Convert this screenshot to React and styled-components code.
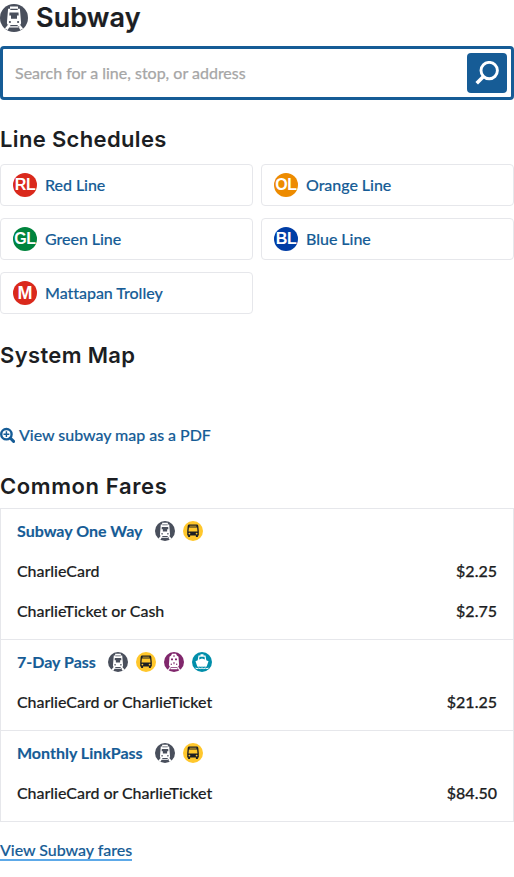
import React from "react";
import styled, { createGlobalStyle } from "styled-components";

const GlobalStyle = createGlobalStyle`
  *, *::before, *::after { box-sizing: border-box; }
  body {
    margin: 0;
    background: #fff;
    color: #1c1e23;
    font: 500 16px/24px Lato, "Liberation Sans", sans-serif;
    letter-spacing: -0.04px;
    -webkit-text-stroke: 0.15px;
  }
  a { color: #165c96; text-decoration: none; }
  svg { display: block; flex: none; }
`;

const Page = styled.main`
  width: 100%;
  height: 877px;
  overflow: hidden;
`;

const Title = styled.h1`
  display: flex;
  align-items: center;
  gap: 8px;
  height: 36px;
  margin: 0 0 10px;
  font: 600 27px/36px Inter, sans-serif;
  letter-spacing: 0.1px;
  -webkit-text-stroke: 0.2px;
`;

const SectionTitle = styled.h2`
  height: 32px;
  margin: ${(p) => p.$top}px 0 ${(p) => p.$bottom}px;
  font: 600 22px/32px Inter, sans-serif;
  letter-spacing: ${(p) => p.$tracking}px;
  white-space: nowrap;
  -webkit-text-stroke: 0;
`;

const SearchBox = styled.form`
  display: flex;
  align-items: center;
  height: 54px;
  padding: 0 4px 0 12px;
  border: 3px solid #165c96;
  border-radius: 4px;
`;

const SearchInput = styled.input`
  flex: 1;
  min-width: 0;
  padding: 0;
  border: 0;
  outline: 0;
  background: transparent;
  font: 400 16px/24px Lato, sans-serif;
  color: #1c1e23;
  &::placeholder { color: #a6a6a6; opacity: 1; -webkit-text-stroke: 0.25px; }
`;

const SearchButton = styled.button`
  display: grid;
  place-items: center;
  width: 40px;
  height: 40px;
  padding: 0;
  border: 0;
  border-radius: 4px;
  background: #165c96;
`;

const LineGrid = styled.div`
  display: grid;
  grid-template-columns: 1fr 1fr;
  gap: 12px 8px;
`;

const LineCard = styled.a`
  display: flex;
  align-items: center;
  gap: 8px;
  height: 42px;
  padding: 0 12px;
  border: 1px solid #e6e7eb;
  border-radius: 4px;
`;

const LineBadge = styled.span`
  display: flex;
  align-items: center;
  justify-content: center;
  width: 24px;
  height: 24px;
  border-radius: 50%;
  background: ${(p) => p.$color};
  color: #fff;
  font: 700 ${(p) => (p.$single ? 18 : 16)}px/24px "Liberation Sans", sans-serif;
  letter-spacing: ${(p) => (p.$single ? 0 : -0.4)}px;
  -webkit-text-stroke: 0;
`;

const MapLink = styled.a`
  display: flex;
  align-items: center;
  gap: 4px;
  height: 24px;
  margin-top: 52px;
`;

const FareTable = styled.div`
  border: 1px solid #e6e7eb;
`;

const FareGroup = styled.section`
  padding: 2px 16px 8px;
  & + & { border-top: 1px solid #e6e7eb; }
`;

const FareHeading = styled.div`
  display: flex;
  align-items: center;
  height: 40px;
  font-weight: 700;
  letter-spacing: 0;
`;

const FareName = styled.a`
  margin-right: 12px;
`;

const Modes = styled.div`
  display: flex;
  gap: 8px;
`;

const FareRow = styled.div`
  display: flex;
  align-items: center;
  justify-content: space-between;
  height: 40px;
`;

const Price = styled.span`
  letter-spacing: 0;
  -webkit-text-stroke: 0.25px;
`;

const FaresLink = styled.a`
  display: inline-block;
  height: 22px;
  margin-top: 17px;
  line-height: 22px;
  border-bottom: 2px solid #5da9e8;
`;

const SubwayIcon = ({ size = 20 }) => (
  <svg width={size} height={size} viewBox="0 0 28 28" aria-label="Subway">
    <circle cx="14" cy="14" r="14" fill="#494f5c" />
    <path fill="#fff" d="M10 2.6h8v2.2h1.9l1.2 14.3q0 1.9-1.8 1.9H8.7q-1.8 0-1.8-1.9L8.1 4.8H10z" />
    <path fill="#494f5c" d="M10.3 4.8h7.4v1.3h-7.4zM9.5 8.4h9l.2 3.1H9.3zM11 11h6v3.8h-6z" />
    <g fill="#494f5c">
      <circle cx="9.9" cy="18" r="1.1" />
      <circle cx="18.1" cy="18" r="1.1" />
    </g>
    <path fill="#fff" d="m8.2 20.5 2.4.4-2.9 5.2-2.8-1.5zM19.8 20.5l-2.4.4 2.9 5.2 2.8-1.5zM8.8 22.3h10.4v1.3H8.8z" />
  </svg>
);

const BusIcon = () => (
  <svg width="20" height="20" viewBox="0 0 20 20" aria-label="Bus">
    <circle cx="10" cy="10" r="10" fill="#ffc72c" />
    <path fill="#1c1e23" d="M6.3 3.6h7.4q1.5 0 1.6 1.4l.5 5v4.6h-.9V16h-2v-1.4H7.1V16h-2v-1.4h-.9V10l.5-5q.1-1.4 1.6-1.4" />
    <path fill="#ffc72c" d="M6.6 4.7h6.8v.8H6.6zM5.9 6.5h8.2l.4 4.1h-9z" />
    <circle cx="6.4" cy="12.6" r=".9" fill="#ffc72c" />
    <circle cx="13.6" cy="12.6" r=".9" fill="#ffc72c" />
  </svg>
);

const RailIcon = () => (
  <svg width="20" height="20" viewBox="0 0 20 20" aria-label="Commuter Rail">
    <circle cx="10" cy="10" r="10" fill="#80276c" />
    <path fill="#fff" d="M8 1.8h4l.8 1.6 1.7 1.3.6 8.5-1.5 2H6.4l-1.5-2 .6-8.5 1.7-1.3z" />
    <g fill="#80276c">
      <circle cx="10" cy="4.1" r=".8" />
      <path d="M7 6.4h2v1.8H7zM11 6.4h2v1.8h-2zM9.5 10h1v2.2h-1z" />
      <circle cx="7.3" cy="12.2" r=".7" />
      <circle cx="12.7" cy="12.2" r=".7" />
    </g>
    <path stroke="#fff" strokeWidth="1.2" fill="none" d="m6.5 14.5-2.2 3.7M13.5 14.5l2.2 3.7M6.5 16.7h7" />
  </svg>
);

const FerryIcon = () => (
  <svg width="20" height="20" viewBox="0 0 20 20" aria-label="Ferry">
    <circle cx="10" cy="10" r="10" fill="#008eaa" />
    <path fill="#fff" d="M8.5 2.2h3v1.3h2l.8 4.7 2.2 1-1.8 5.2q-1.2.9-2.4 0-1.2.9-2.3 0-1.1.9-2.3 0-1.2.9-2.4 0L3.5 9.2l2.2-1 .8-4.7h2z" />
    <path fill="#008eaa" d="M7.5 4.8h5l.4 2.8L10 6.4 7.1 7.6z" />
    <path stroke="#fff" fill="none" d="M3.5 16.1q1.6 1 3.2 0 1.6 1 3.3 0 1.6 1 3.3 0 1.6 1 3.2 0" />
  </svg>
);

const SearchIcon = () => (
  <svg width="24" height="24" viewBox="0 0 24 24" fill="none" stroke="#fff">
    <circle cx="14.2" cy="9.6" r="8.2" strokeWidth="2.9" />
    <path d="m8.5 15.5-6.8 6.8" strokeWidth="3.6" />
  </svg>
);

const ZoomIcon = () => (
  <svg width="15" height="16" viewBox="0 0 15 16" fill="none" stroke="#165c96">
    <circle cx="6.4" cy="7.2" r="5.2" strokeWidth="2.4" />
    <path d="m10.2 11 3.4 3.4" strokeWidth="3" strokeLinecap="round" />
    <path d="M6.4 4.3v5.8M3.5 7.2h5.8" strokeWidth="1.4" />
  </svg>
);

const modeIcons = { subway: SubwayIcon, bus: BusIcon, rail: RailIcon, ferry: FerryIcon };

const lines = [
  { code: "RL", name: "Red Line", color: "#da291c" },
  { code: "OL", name: "Orange Line", color: "#ed8b00" },
  { code: "GL", name: "Green Line", color: "#00843d" },
  { code: "BL", name: "Blue Line", color: "#003da5" },
  { code: "M", name: "Mattapan Trolley", color: "#da291c" },
];

const fares = [
  {
    name: "Subway One Way",
    modes: ["subway", "bus"],
    rows: [["CharlieCard", "$2.25"], ["CharlieTicket or Cash", "$2.75"]],
  },
  {
    name: "7-Day Pass",
    modes: ["subway", "bus", "rail", "ferry"],
    rows: [["CharlieCard or CharlieTicket", "$21.25"]],
  },
  {
    name: "Monthly LinkPass",
    modes: ["subway", "bus"],
    rows: [["CharlieCard or CharlieTicket", "$84.50"]],
  },
];

export default function App() {
  return (
    <Page>
      <GlobalStyle />
      <Title><SubwayIcon size={28} />Subway</Title>
      <SearchBox>
        <SearchInput placeholder="Search for a line, stop, or address" />
        <SearchButton type="button" aria-label="Search"><SearchIcon /></SearchButton>
      </SearchBox>
      <SectionTitle $top={23} $bottom={9} $tracking={0.35}>Line Schedules</SectionTitle>
      <LineGrid>
        {lines.map((line) => (
          <LineCard key={line.name} href="#">
            <LineBadge $color={line.color} $single={line.code.length === 1}>{line.code}</LineBadge>
            {line.name}
          </LineCard>
        ))}
      </LineGrid>
      <SectionTitle $top={25} $bottom={0} $tracking={0.35}>System Map</SectionTitle>
      <MapLink href="#"><ZoomIcon />View subway map as a PDF</MapLink>
      <SectionTitle $top={23} $bottom={6} $tracking={0.6}>Common Fares</SectionTitle>
      <FareTable>
        {fares.map((fare) => (
          <FareGroup key={fare.name}>
            <FareHeading>
              <FareName href="#">{fare.name}</FareName>
              <Modes>
                {fare.modes.map((mode) => {
                  const Icon = modeIcons[mode];
                  return <Icon key={mode} />;
                })}
              </Modes>
            </FareHeading>
            {fare.rows.map(([label, price]) => (
              <FareRow key={label}><span>{label}</span><Price>{price}</Price></FareRow>
            ))}
          </FareGroup>
        ))}
      </FareTable>
      <FaresLink href="#">View Subway fares</FaresLink>
    </Page>
  );
}
